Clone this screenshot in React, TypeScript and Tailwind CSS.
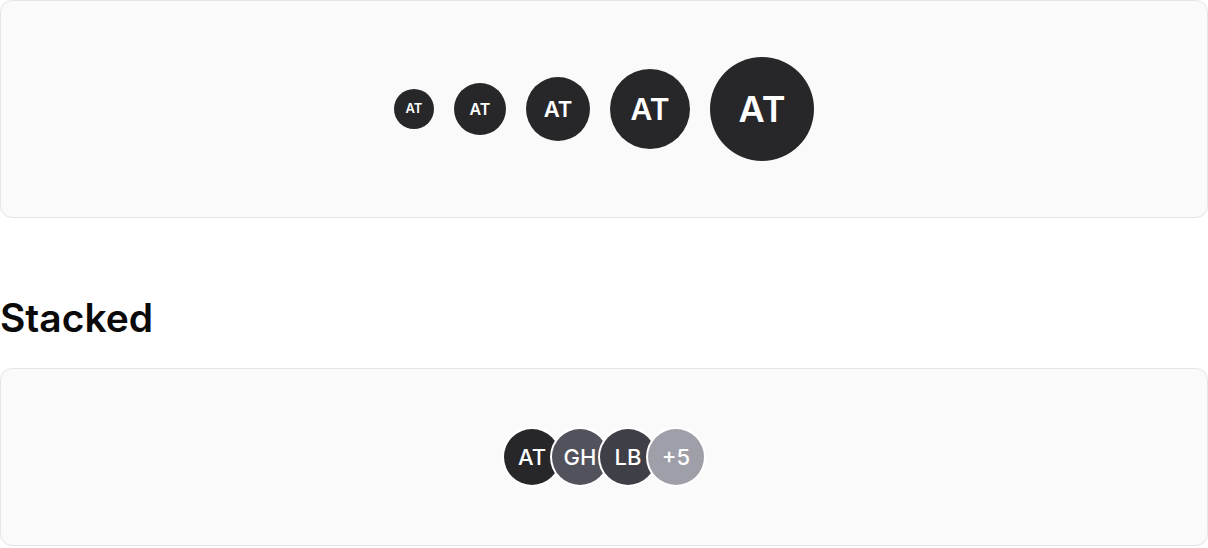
const SIZES = [
  { box: "size-10", text: "text-[13px]" },
  { box: "size-[52px]", text: "text-base" },
  { box: "size-16", text: "text-[22px]" },
  { box: "size-20", text: "text-3xl" },
  { box: "size-[104px]", text: "text-4xl" },
];

const STACK = [
  { label: "AT", bg: "bg-zinc-800" },
  { label: "GH", bg: "bg-zinc-600" },
  { label: "LB", bg: "bg-zinc-700" },
  { label: "+5", bg: "bg-zinc-400" },
];

export default function App() {
  return (
    <div className="bg-white font-['Inter',sans-serif] text-neutral-950">
      <section className="rounded-xl border border-neutral-200 bg-neutral-50 py-14 flex items-center justify-center gap-5">
        {SIZES.map((s, i) => (
          <div
            key={i}
            className={`${s.box} ${s.text} rounded-full bg-zinc-800 text-white font-semibold flex items-center justify-center`}
          >
            AT
          </div>
        ))}
      </section>

      <h2 className="mt-20 mb-[30px] text-[39px] leading-10 font-semibold">Stacked</h2>

      <section className="rounded-xl border border-neutral-200 bg-neutral-50 py-[60px] flex items-center justify-center">
        <div className="flex -space-x-2">
          {STACK.map((a) => (
            <div
              key={a.label}
              className={`${a.bg} size-14 rounded-full ring-2 ring-white text-white text-[22px] font-medium flex items-center justify-center overflow-hidden`}
            >
              {a.label}
            </div>
          ))}
        </div>
      </section>
    </div>
  );
}
